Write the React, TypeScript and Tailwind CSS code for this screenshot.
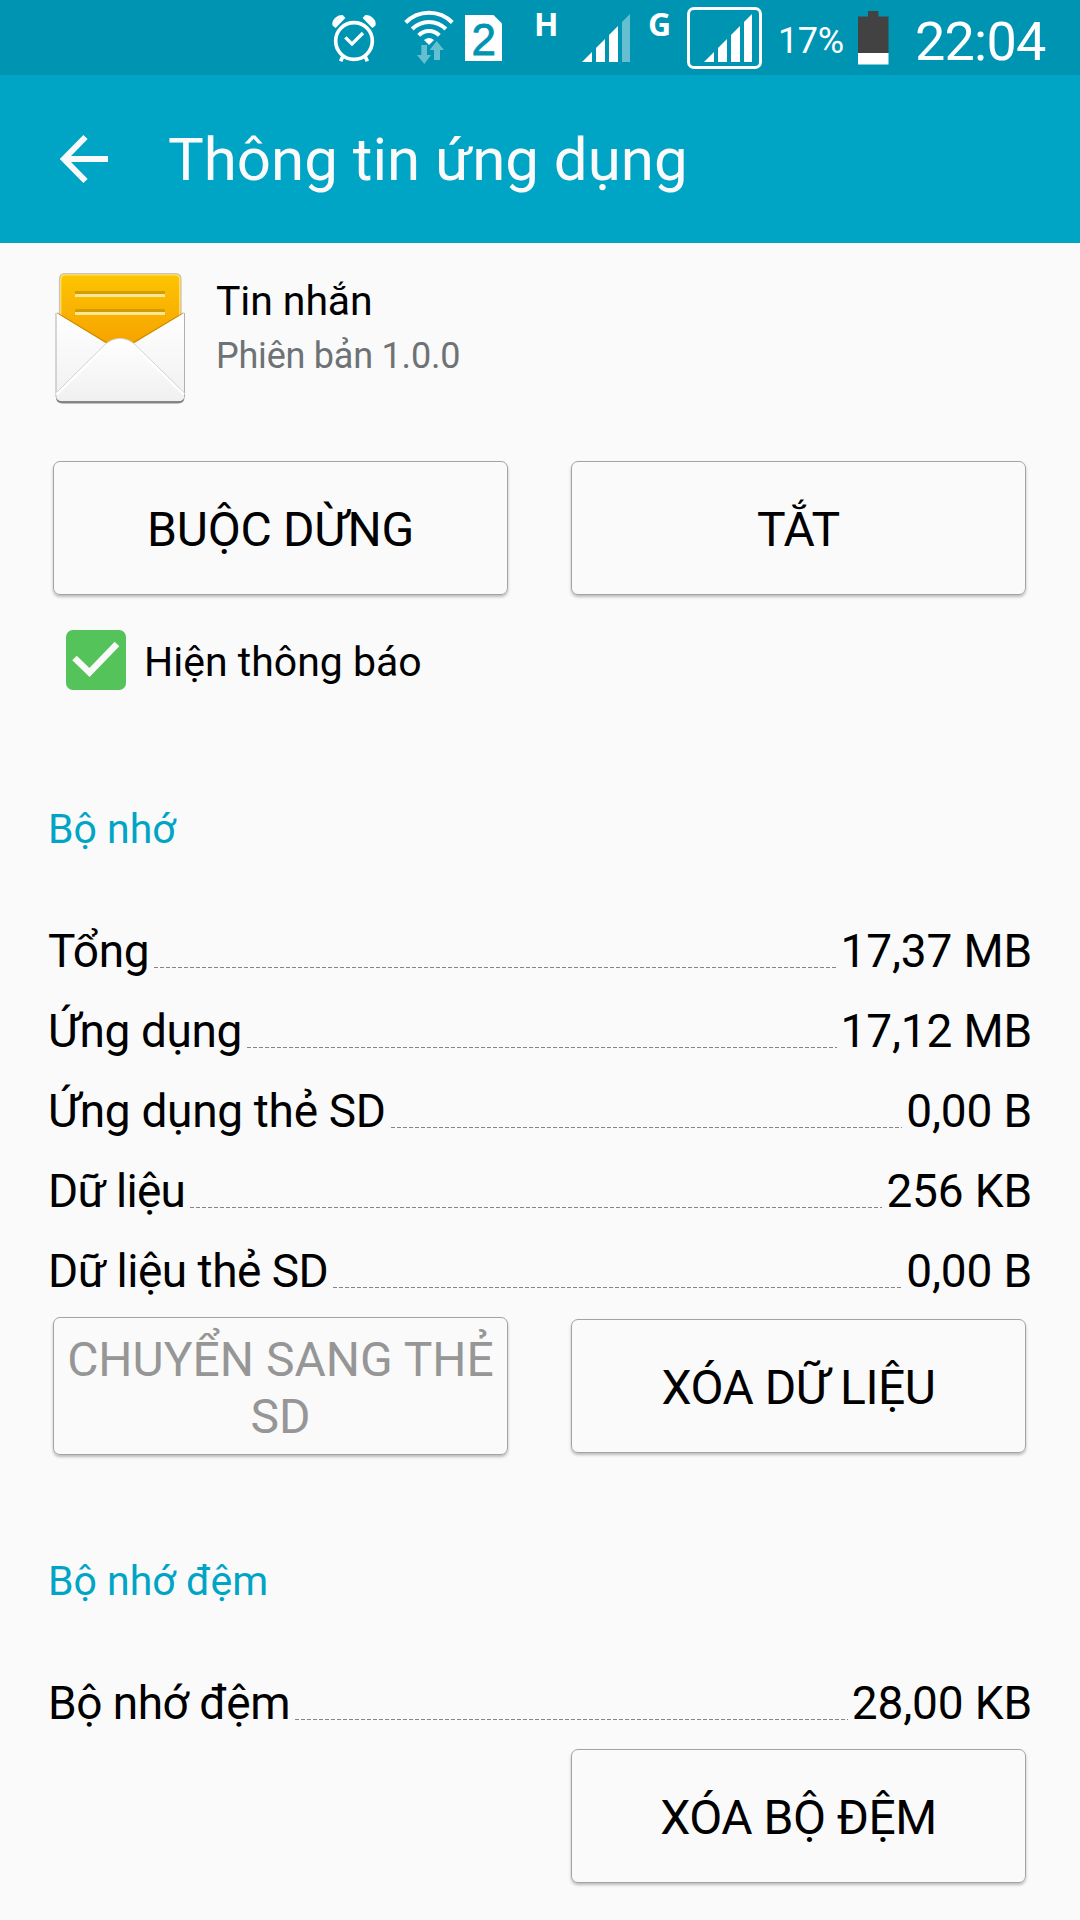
import React from 'react';

interface StorageItem {
  label: string;
  value: string;
  tracking: string;
}

interface ActionButtonProps {
  children: React.ReactNode;
  disabled?: boolean;
  className?: string;
}

const storageItems: StorageItem[] = [
  { label: 'Tổng', value: '17,37 MB', tracking: 'tracking-[-0.4px]' },
  { label: 'Ứng dụng', value: '17,12 MB', tracking: 'tracking-[-0.4px]' },
  { label: 'Ứng dụng thẻ SD', value: '0,00 B', tracking: 'tracking-[-0.3px]' },
  { label: 'Dữ liệu', value: '256 KB', tracking: 'tracking-[-0.7px]' },
  { label: 'Dữ liệu thẻ SD', value: '0,00 B', tracking: 'tracking-[-0.5px]' }
];

const cacheItems: StorageItem[] = [
  { label: 'Bộ nhớ đệm', value: '28,00 KB', tracking: 'tracking-[-0.5px]' }
];

const AlarmIcon = () => (
  <svg className="w-[44px] h-[75px] shrink-0" viewBox="36 0 132 225" fill="none">
    <circle cx="102" cy="123" r="55" stroke="white" strokeWidth="11" />
    <path d="M76 112L96 132L129 99" stroke="white" strokeWidth="10" />
    <path d="M47 84L38 77Q34 65 45 54Q57 43 69 46L76 54Z" fill="white" />
    <path d="M157 84L166 77Q170 65 159 54Q147 43 135 46L128 54Z" fill="white" />
    <path d="M69 168L62 184M135 168L142 184" stroke="white" strokeWidth="11" />
  </svg>
);

const WifiIcon = () => (
  <svg className="w-[50px] h-[75px] shrink-0" viewBox="252 0 150 225" fill="none">
    <path d="M257 67.500A98 98 0 0 1 397 67.500" stroke="white" strokeWidth="12" />
    <path d="M276.500 87A70.500 70.500 0 0 1 377.500 87" stroke="white" strokeWidth="12" />
    <path d="M296 106A43 43 0 0 1 358 106" stroke="white" strokeWidth="12" />
    <path d="M312 120Q327 108 342 120L327 135Z" fill="white" />
    <path d="M304 135H321V165H333L313 192L291 165H304Z" fill="#66bfd1" />
    <path d="M350 123L372 150H360V180H342V150H329Z" fill="#66bfd1" />
  </svg>
);

const SimIcon = () => (
  <svg className="w-[37px] h-[75px] shrink-0" viewBox="0 0 37 75">
    <path d="M0 15H28.500L37 23.500V61H0Z" fill="white" />
    <text
      x="18.700"
      y="55"
      fontSize="44"
      textAnchor="middle"
      fill="#0094b3"
      stroke="#0094b3"
      strokeWidth="0.8"
      className="font-['Liberation_Sans',sans-serif]"
    >
      2
    </text>
  </svg>
);

const SignalBars = ({ weak = false }: { weak?: boolean }) => (
  <svg className="w-[48px] h-[75px] shrink-0" viewBox="0 0 48 75" fill="white">
    <path d="M0 62L10 52V62Z" />
    <path d="M14 62V48L23 39V62Z" />
    <path d="M27 62V35L36 26V62Z" />
    <path d="M40 62V22L48 14V62Z" fill={weak ? '#66bfd1' : 'white'} />
  </svg>
);

const BatteryIcon = () => (
  <svg className="w-[31px] h-[75px] shrink-0" viewBox="0 0 31 75">
    <path d="M10 11H20.500V16.500H30.500V53H0V16.500H10Z" fill="#424242" />
    <path d="M0 53H30.500V64.500H0Z" fill="white" />
  </svg>
);

const StatusBar = () => (
  <div className="flex h-[75px] bg-[#0094b3] pl-[332px] text-white">
    <AlarmIcon />
    <div className="ml-[28px] flex">
      <WifiIcon />
    </div>
    <div className="ml-[11px] flex">
      <SimIcon />
    </div>
    <span className="ml-[32px] mt-[8px] w-[25px] font-['Open_Sans',sans-serif] text-[32px] font-bold leading-[32px]">H</span>
    <div className="ml-[23px] flex">
      <SignalBars weak />
    </div>
    <span className="ml-[18px] mt-[8px] w-[25px] font-['Open_Sans',sans-serif] text-[32px] font-bold leading-[32px]">G</span>
    <div className="ml-[14px] mt-[7px] h-[62px] w-[75px] rounded-[7px] border-[3px] border-white">
      <div className="-mt-[10px] ml-[14px] flex">
        <SignalBars />
      </div>
    </div>
    <span className="ml-[16px] w-[68px] text-[36px] leading-[82px] tracking-[-0.4px]">17%</span>
    <div className="ml-[12px] flex">
      <BatteryIcon />
    </div>
    <span className="ml-[26px] text-[54px] leading-[83px] tracking-[-0.8px]">22:04</span>
  </div>
);

const MessageIcon = () => (
  <svg className="h-[134px] w-[134px] shrink-0" viewBox="53 271 134 134">
    <defs>
      <linearGradient id="paper" x1="0" y1="0" x2="0" y2="1">
        <stop offset="0" stopColor="#fdc500" />
        <stop offset="1" stopColor="#f6a200" />
      </linearGradient>
      <linearGradient id="envelope" x1="0" y1="0" x2="0" y2="1">
        <stop offset="0" stopColor="#ffffff" />
        <stop offset="1" stopColor="#f0f0f0" />
      </linearGradient>
    </defs>
    {/* Letter */}
    <path d="M59.500 345V279Q59.500 273.500 65 273.500H175.500Q181 273.500 181 279V345Z" fill="url(#paper)" stroke="#c4c4c4" strokeWidth="1.2" />
    <path d="M60.800 316V279.500Q60.800 274.800 65.500 274.800H175Q179.700 274.800 179.700 279.500V316" fill="none" stroke="#ffe07a" strokeWidth="1.2" />
    <path d="M75 291H165V294H75ZM75 309H165V312H75Z" fill="#d09e00" />
    <path d="M75 294H165V297H75ZM75 312H165V315H75Z" fill="#ffe694" />
    {/* Envelope body */}
    <path d="M56 314L105.500 343.500H134.500L184.500 314V397Q184.500 403.500 178 403.500H62.500Q56 403.500 56 397Z" fill="#858585" />
    <path d="M56 312.800L105.500 343H134.500L184.500 312.800V395Q184.500 401 178 401H62.500Q56 401 56 395Z" fill="url(#envelope)" />
    <path d="M56 397V313M184.500 397V313" fill="none" stroke="#b0b0b0" strokeWidth="1" />
    <path d="M57 312.800L106 342.300M183.500 312.800L134 342.300" stroke="#b87c00" strokeWidth="0.8" />
    {/* Front flap */}
    <path d="M56.500 392.500L104 345.500Q111 338.500 120 338.500Q129 338.500 136 345.500L184 392.500V395Q184 401 178 401H62.500Q56.500 401 56.500 395Z" fill="url(#envelope)" />
    <path d="M56.500 394.500L105 347Q111 340.500 120 340.500Q129 340.500 135 347L184 394.500" fill="none" stroke="#ffffff" strokeWidth="2.5" />
    <path d="M56.500 392.500L104 345.500Q111 338.500 120 338.500Q129 338.500 136 345.500L184 392.500" fill="none" stroke="#d2d2d2" strokeWidth="1" />
  </svg>
);

const ActionButton: React.FC<ActionButtonProps> = ({ children, disabled = false, className = '' }) => (
  <button
    disabled={disabled}
    className={`
      flex w-[455px] items-center justify-center rounded-[7px] border border-[#a3a3a3] px-[8px] pt-[3px]
      text-center text-[48px] leading-[57px] shadow-[0_2px_3px_rgba(0,0,0,0.25)]
      ${disabled ? 'text-[#969696]' : 'text-black'} ${className}
    `}
  >
    {children}
  </button>
);

const SectionTitle = ({ children }: { children: React.ReactNode }) => (
  <h2 className="px-[48px] text-[41px] leading-[48px] text-[#00a5c6]">{children}</h2>
);

const StorageList = ({ items }: { items: StorageItem[] }) => (
  <ul className="px-[48px]">
    {items.map(item => (
      <li key={item.label} className="flex h-[80px] text-[46px] leading-[80px] text-black">
        <span className={`whitespace-nowrap ${item.tracking}`}>{item.label}</span>
        {/* Dashed leader on the text baseline */}
        <div className="ml-[5px] mr-[4px] mt-[56px] h-px flex-1 bg-[repeating-linear-gradient(90deg,#858585_0_4px,transparent_4px_6px)]" />
        <span className="whitespace-nowrap tracking-[-0.15px]">{item.value}</span>
      </li>
    ))}
  </ul>
);

const App: React.FC = () => {
  return (
    <div className="h-[1920px] w-[1080px] overflow-hidden bg-[#fafafa] font-[Roboto,sans-serif]">
      <StatusBar />

      <header className="flex h-[168px] items-center bg-[#00a5c6] pl-[60px] text-[#fafafa]">
        <svg className="h-[50px] w-[49px]" viewBox="0 0 49 50" fill="none" stroke="currentColor" strokeWidth="6">
          <path d="M25.500 3L4 25L25.500 47M4 25H48" />
        </svg>
        <h1 className="ml-[59px] mt-[2px] text-[60px] leading-[70px]">Thông tin ứng dụng</h1>
      </header>

      {/* App summary */}
      <div className="flex px-[53px] pt-[28px]">
        <MessageIcon />
        <div className="ml-[29px] pt-[5px]">
          <p className="text-[41px] leading-[50px] tracking-[-0.1px] text-black">Tin nhắn</p>
          <p className="mt-[6px] text-[36px] leading-[48px] tracking-[-0.22px] text-[#6e7274]">Phiên bản 1.0.0</p>
        </div>
      </div>

      <div className="mt-[56px] flex gap-[63px] px-[53px]">
        <ActionButton className="h-[134px] tracking-[-0.25px]">BUỘC DỪNG</ActionButton>
        <ActionButton className="h-[134px] tracking-[-0.25px]">TẮT</ActionButton>
      </div>

      <label className="mt-[35px] flex h-[60px] items-center px-[66px]">
        <span className="flex h-[60px] w-[60px] rounded-[7px] bg-[#53c35a]">
          <svg className="h-[60px] w-[60px]" viewBox="0 0 60 60" fill="none" stroke="#fafafa" strokeWidth="6.5">
            <path d="M8.500 28L23.500 42.500L51 14" />
          </svg>
        </span>
        <span className="ml-[18px] mt-[3px] text-[41px] leading-[50px] text-black">Hiện thông báo</span>
      </label>

      <section className="mt-[115px]">
        <SectionTitle>Bộ nhớ</SectionTitle>
        <div className="mt-[58px]">
          <StorageList items={storageItems} />
        </div>
        <div className="mt-[6px] flex items-center gap-[63px] px-[53px]">
          <ActionButton disabled className="h-[138px]">CHUYỂN SANG THẺ SD</ActionButton>
          <ActionButton className="h-[134px] tracking-[-0.5px]">XÓA DỮ LIỆU</ActionButton>
        </div>
      </section>

      <section className="mt-[102px]">
        <SectionTitle>Bộ nhớ đệm</SectionTitle>
        <div className="mt-[58px]">
          <StorageList items={cacheItems} />
        </div>
        <div className="mt-[6px] flex justify-end px-[54px]">
          <ActionButton className="h-[134px] tracking-[-0.5px]">XÓA BỘ ĐỆM</ActionButton>
        </div>
      </section>
    </div>
  );
};

export default App;
